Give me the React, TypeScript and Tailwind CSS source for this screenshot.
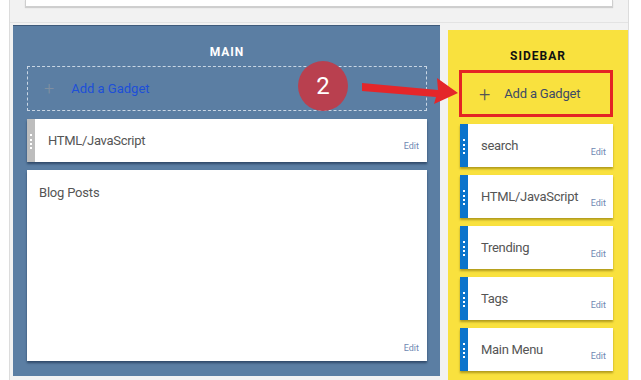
import React from "react";

function Handle({ color }: { color: string }) {
  return (
    <div className={`w-[8px] shrink-0 flex justify-center pt-[15px] ${color}`}>
      <div className="w-[2px] h-[15px] border-l-2 border-dotted border-white" />
    </div>
  );
}

function SideCard({ title }: { title: string }) {
  return (
    <div className="h-[43px] flex bg-white shadow-[0_2px_2px_rgba(120,100,0,0.55)]">
      <Handle color="bg-[#0b74cc]" />
      <div className="flex-1 relative">
        <div className="absolute left-[13px] top-[15px] text-[13px] tracking-[-0.3px] leading-none text-[#555]">{title}</div>
        <div className="absolute right-[7px] bottom-[10px] text-[9px] leading-none text-[#7088b2]">Edit</div>
      </div>
    </div>
  );
}

export default function App() {
  return (
    <div className="w-[641px] h-[380px] bg-white overflow-hidden relative font-['Roboto',sans-serif]">
      <div className="ml-[9px] w-[620px] h-full bg-[#f2f2f2] border-l border-r border-[#dcdcdc] flex flex-col">
        <div className="h-[23px] px-[15px] border-b border-[#e3e3e3] shrink-0">
          <div className="h-[7px] bg-white border border-t-0 border-[#cfcfcf] shadow-[0_1px_1px_rgba(0,0,0,0.15)]" />
        </div>
        <div className="flex pl-[3px] pt-[2px] flex-1">
          {/* MAIN */}
          <div className="w-[427px] h-[351px] bg-[#5b7ea3] border-t border-[#3e5a7a] px-[14px] pr-[13px] flex flex-col">
            <div className="text-center text-white font-bold text-[12px] tracking-[1px] leading-none mt-[20px]">MAIN</div>
            <div className="mt-[8px] h-[45px] border border-dashed border-[#c9d6e4] flex items-center">
              <span className="ml-[16px] text-[18px] leading-none text-[#7f8fa0] font-light">+</span>
              <span className="ml-[17px] text-[13px] text-[#1d4fd8]">Add a Gadget</span>
            </div>
            <div className="mt-[8px] h-[43px] flex bg-white shadow-[0_2px_2px_rgba(20,40,70,0.6)]">
              <Handle color="bg-[#bdbdbd]" />
              <div className="flex-1 relative">
                <div className="absolute left-[13px] top-[15px] text-[13px] tracking-[-0.3px] leading-none text-[#555]">HTML/JavaScript</div>
                <div className="absolute right-[8px] bottom-[11px] text-[9px] leading-none text-[#7088b2]">Edit</div>
              </div>
            </div>
            <div className="mt-[8px] h-[191px] bg-white relative shadow-[0_2px_2px_rgba(20,40,70,0.6)]">
              <div className="absolute left-[12px] top-[16px] text-[13px] tracking-[-0.2px] leading-none text-[#555]">Blog Posts</div>
              <div className="absolute right-[8px] bottom-[8px] text-[9px] leading-none text-[#7088b2]">Edit</div>
            </div>
          </div>
          {/* SIDEBAR */}
          <div className="ml-[8px] w-[180px] mt-[5px] bg-[#f9e13e] pl-[11px] pr-[15px] flex flex-col">
            <div className="text-center text-[#111] font-bold text-[12px] tracking-[1px] leading-none mt-[20px] pl-[4px]">SIDEBAR</div>
            <div className="mt-[8px] h-[47px] border-[3px] border-[#e42424] flex items-center">
              <span className="ml-[17px] text-[20px] leading-none text-[#555] font-light">+</span>
              <span className="ml-[14px] text-[13px] tracking-[-0.2px] text-[#3d4a66]">Add a Gadget</span>
            </div>
            <div className="mt-[7px] ml-[1px] flex flex-col gap-[8px]">
              <SideCard title="search" />
              <SideCard title="HTML/JavaScript" />
              <SideCard title="Trending" />
              <SideCard title="Tags" />
              <SideCard title="Main Menu" />
            </div>
          </div>
        </div>
      </div>

      {/* Annotation overlay */}
      <div className="absolute left-[298px] top-[61px] w-[50px] h-[50px] rounded-full bg-[#b9404f] flex items-center justify-center text-white text-[24px] leading-none">
        2
      </div>
      <svg className="absolute left-[360px] top-[76px]" width="100" height="30" viewBox="0 0 100 30">
        <polygon points="2,7 78,14 77,2 98,17 74,28 76,21 2,15" fill="#e4262a" />
      </svg>
    </div>
  );
}
